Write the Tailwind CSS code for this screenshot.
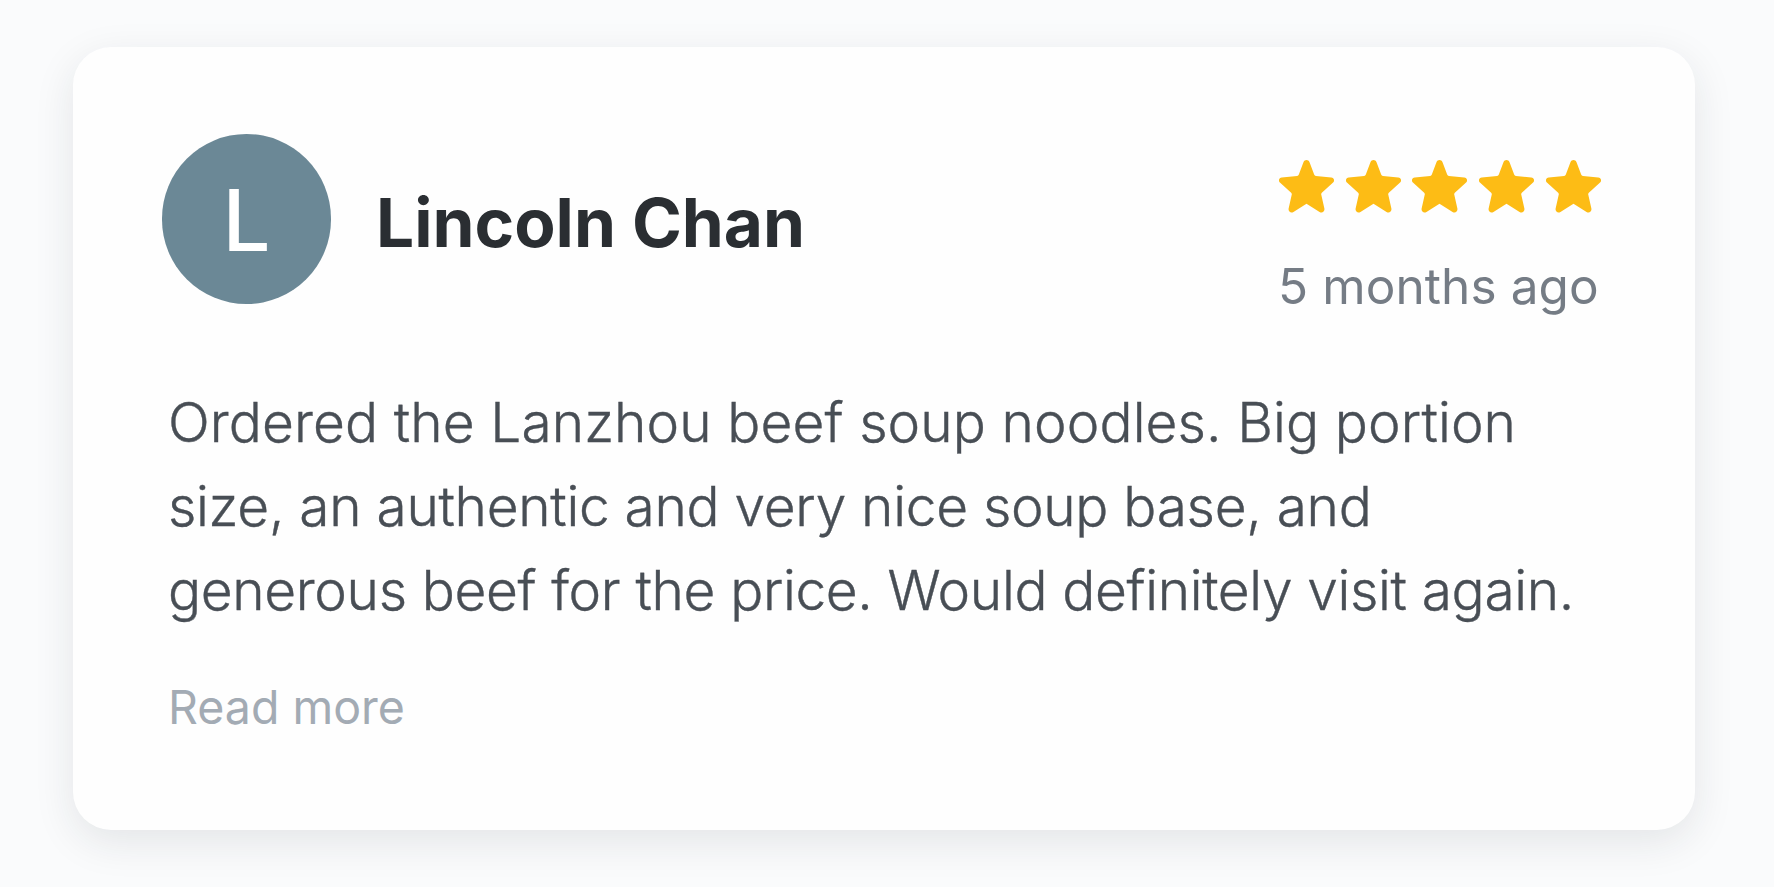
<!DOCTYPE html>
<html lang="en">
<head>
  <meta charset="UTF-8">
  <title>Customer review</title>
  <script src="https://cdn.jsdelivr.net/npm/@tailwindcss/browser@4"></script>
</head>
<body class="w-[1774px] h-[887px] overflow-hidden bg-[#fafbfc] font-['Inter','Liberation_Sans',sans-serif]">
  <svg class="hidden">
    <symbol id="star" viewBox="0 0 56 55">
      <path d="M24.9 2.7C26 -.2 30 -.2 31.1 2.7L35.8 15.3Q36.3 16.5 37.6 16.7L53.2 18.4C56.2 18.8 57 21.9 54.8 23.7L43.6 33.8Q42.8 34.6 43 35.7L46.2 49.8C46.8 53 44 54.9 41.3 53.4L28 45L14.7 53.4C12 54.9 9.2 53 9.8 49.8L13 35.7Q13.2 34.6 12.4 33.8L1.2 23.7C-1 21.9 -.2 18.8 2.8 18.4L18.4 16.7Q19.7 16.5 20.2 15.3Z" fill="#fdbc15"/>
    </symbol>
  </svg>

  <div class="pt-[47px] pl-[73px]">
    <article class="w-[1622px] h-[783px] rounded-[38px] bg-[#fefefe] pt-[87px] pl-[89px] pr-[94px] shadow-[0_12px_40px_rgba(30,35,50,0.10)]">
      <header class="flex justify-between h-[190px]">
        <div class="flex">
          <div class="flex items-center justify-center w-[169px] h-[170px] rounded-full bg-[#6b8896] text-white text-[85px] font-medium leading-none pt-[2px]">L</div>
          <h2 class="ml-[45px] pt-[47px] text-[67.5px] leading-[84px] font-bold text-[#2a2e32] whitespace-nowrap">Lincoln Chan</h2>
        </div>
        <div class="pt-[25px] w-[323px]">
          <div class="flex gap-[11.7px] pl-[1px]">
            <svg class="w-[55px] h-[55px] shrink-0"><use href="#star"/></svg>
            <svg class="w-[55px] h-[55px] shrink-0"><use href="#star"/></svg>
            <svg class="w-[55px] h-[55px] shrink-0"><use href="#star"/></svg>
            <svg class="w-[55px] h-[55px] shrink-0"><use href="#star"/></svg>
            <svg class="w-[55px] h-[55px] shrink-0"><use href="#star"/></svg>
          </div>
          <p class="mt-[42px] text-[49.5px] leading-[60px] tracking-[0.1px] text-[#757c85] whitespace-nowrap">5 months ago</p>
        </div>
      </header>

      <div class="mt-[56px] pl-[6px] text-[55px] leading-[84px] font-light text-[#484e55] [-webkit-text-stroke:0.4px_#484e55] whitespace-nowrap">
        <p class="tracking-[0.1px]">Ordered the Lanzhou beef soup noodles. Big portion</p>
        <p class="tracking-[-0.3px]">size, an authentic and very nice soup base, and</p>
        <p class="tracking-[-0.35px]">generous beef for the price. Would definitely visit again.</p>
      </div>

      <button class="mt-[45px] ml-[6px] text-[46.5px] leading-[60px] text-[#a3abb4] whitespace-nowrap">Read more</button>
    </article>
  </div>
</body>
</html>
